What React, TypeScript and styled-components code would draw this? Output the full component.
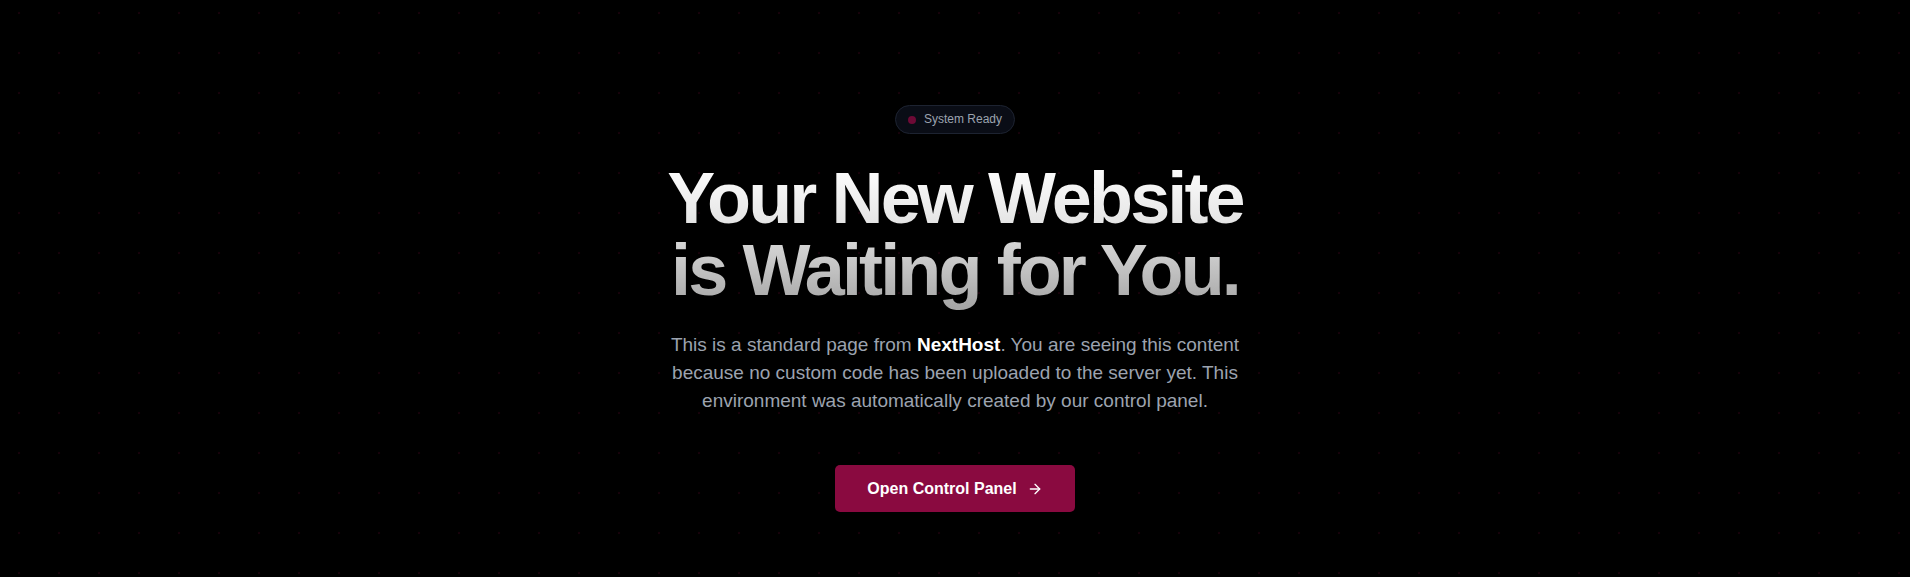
import React from "react";
import styled, { createGlobalStyle } from "styled-components";
import { ArrowRight } from "lucide-react";

const GlobalStyle = createGlobalStyle`
  html, body {
    margin: 0;
    padding: 0;
    background: #000;
  }

  body {
    font-family: "Liberation Sans", Arial, sans-serif;
    -webkit-font-smoothing: antialiased;
  }
`;

const Page = styled.main`
  min-height: 100vh;
  box-sizing: border-box;
  padding-top: 105px;
  display: flex;
  flex-direction: column;
  align-items: center;
  background-color: #000;
  background-image: radial-gradient(circle, rgba(139, 10, 64, 0.16) 1px, transparent 1.6px);
  background-size: 40px 40px;
  background-position: -1px -7px;
`;

const StatusBadge = styled.div`
  display: inline-flex;
  align-items: center;
  gap: 8px;
  padding: 6px 12px;
  border: 1px solid #1d2331;
  border-radius: 999px;
  background: #0a0d16;
  color: #9ca3af;
  font-size: 12px;
  line-height: 15px;
`;

const StatusDot = styled.span`
  width: 8px;
  height: 8px;
  border-radius: 50%;
  background: #6e0a36;
`;

const Heading = styled.h1`
  margin: 28px 0 0;
  padding-bottom: 10px;
  font-size: 72px;
  font-weight: 700;
  line-height: 72px;
  letter-spacing: -0.04em;
  text-align: center;
  background: linear-gradient(to bottom, #ffffff 0%, #e6e6e6 38%, #a6a6a6 94%);
  -webkit-background-clip: text;
  background-clip: text;
  color: transparent;
`;

const Description = styled.p`
  margin: 15px 0 0;
  max-width: 640px;
  color: #9ca3af;
  font-size: 19px;
  line-height: 28px;
  text-align: center;
`;

const Brand = styled.strong`
  color: #fff;
  font-weight: 700;
`;

const PanelButton = styled.a`
  margin-top: 50px;
  display: inline-flex;
  align-items: center;
  gap: 10px;
  height: 47px;
  box-sizing: border-box;
  padding: 0 32px;
  border-radius: 5px;
  background: #8a0a40;
  color: #fff;
  font-size: 16px;
  font-weight: 700;
  text-decoration: none;
  cursor: pointer;
`;

export default function App() : JSX.Element
{
  return (
    <>
      <GlobalStyle />
      <Page>
        <StatusBadge>
          <StatusDot />
          System Ready
        </StatusBadge>

        <Heading>
          Your New Website
          <br />
          is Waiting for You.
        </Heading>

        <Description>
          This is a standard page from <Brand>NextHost</Brand>. You are seeing this content
          because no custom code has been uploaded to the server yet. This environment was
          automatically created by our control panel.
        </Description>

        <PanelButton href="#">
          Open Control Panel
          <ArrowRight size={16} strokeWidth={2} />
        </PanelButton>
      </Page>
    </>
  );
}
